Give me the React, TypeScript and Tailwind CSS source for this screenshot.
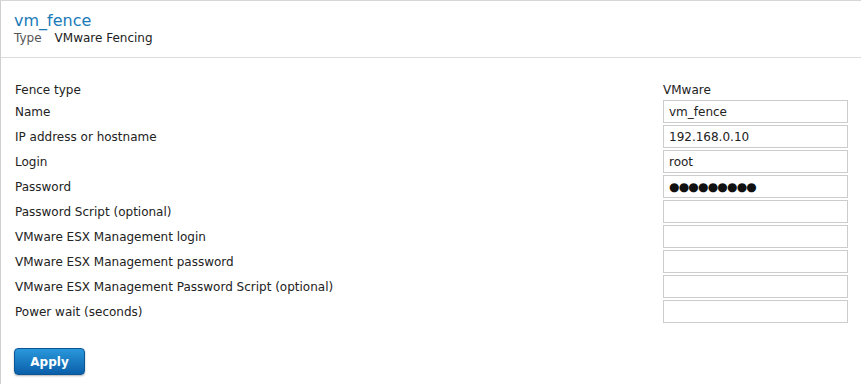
import React from 'react'

const fields = [
	{ label: 'Name', value: 'vm_fence' },
	{ label: 'IP address or hostname', value: '192.168.0.10' },
	{ label: 'Login', value: 'root' },
	{ label: 'Password', value: '●●●●●●●●●', secret: true },
	{ label: 'Password Script (optional)', value: '' },
	{ label: 'VMware ESX Management login', value: '' },
	{ label: 'VMware ESX Management password', value: '' },
	{ label: 'VMware ESX Management Password Script (optional)', value: '' },
	{ label: 'Power wait (seconds)', value: '' }
]

const App = () => {
	return (
		<div className="w-[861px] h-[384px] bg-white overflow-hidden font-['DejaVu_Sans',sans-serif] text-[12px] leading-[16px] text-[#222]">
			<div className="h-full border-l border-t border-l-[#cfcfcf] border-t-[#d6d6d6]">
				{/* header */}
				<div className="h-[57px] border-b border-[#dcdcdc] pl-[13px] pt-[10px]">
					<h1 className="text-[16px] leading-[19px] text-[#1a7ab8]">vm_fence</h1>
					<div className="flex">
						<span className="text-[#555] mr-[13px]">Type</span>
						<span className="text-[#222]">VMware Fencing</span>
					</div>
				</div>

				<div className="pl-[14px] pr-[13px] pt-[24px]">
					<div className="flex flex-col gap-[2px]">
						<div className="flex items-center h-[16px]">
							<span className="flex-1">Fence type</span>
							<span className="w-[185px]">VMware</span>
						</div>
						{fields.map((f) => (
							<div key={f.label} className="flex items-center h-[23px]">
								<span className="flex-1">{f.label}</span>
								<input
									readOnly
									value={f.value}
									className={
										f.secret
											? "w-[185px] h-[23px] border border-[#cccccc] bg-white px-[5px] text-[12px] tracking-[-0.8px] text-[#111] outline-none font-['DejaVu_Sans',sans-serif]"
											: "w-[185px] h-[23px] border border-[#cccccc] bg-white px-[5px] text-[12px] text-[#222] outline-none font-['DejaVu_Sans',sans-serif]"
									}
								/>
							</div>
						))}
					</div>

					<button className="mt-[25px] -ml-px w-[71px] h-[27px] rounded-[4px] border border-[#0b5595] bg-gradient-to-b from-[#2a98dc] to-[#0a5fa9] text-white font-bold text-[12px] shadow-[0_1px_2px_rgba(0,0,0,0.3)]">
						Apply
					</button>
				</div>
			</div>
		</div>
	)
}

export default App
